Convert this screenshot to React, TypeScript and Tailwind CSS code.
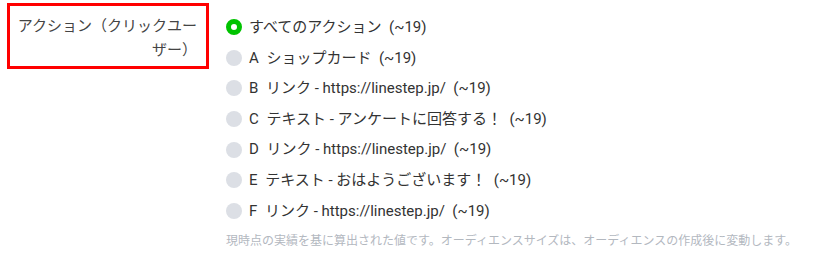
import { useState } from 'react';

const OPTIONS = [
  { id: 'all', label: 'すべてのアクション', count: '(~19)' },
  { id: 'A', label: 'A\u2002ショップカード', count: '(~19)' },
  { id: 'B', label: 'B\u2002リンク - https://linestep.jp/', count: '(~19)' },
  { id: 'C', label: 'C\u2002テキスト - アンケートに回答する！', count: '(~19)' },
  { id: 'D', label: 'D\u2002リンク - https://linestep.jp/', count: '(~19)' },
  { id: 'E', label: 'E\u2002テキスト - おはようございます！', count: '(~19)' },
  { id: 'F', label: 'F\u2002リンク - https://linestep.jp/', count: '(~19)' },
];

function ActionFilter() {
  const [selected, setSelected] = useState('all');

  return (
    <div className="flex min-h-screen bg-white font-['Roboto','Noto_Sans_CJK_JP',sans-serif] text-[#333]">
      <div className="ml-[7px] mt-[3px] h-[66px] w-[202px] shrink-0 border-[3px] border-[#ff0000] pl-[5px] pr-[9px] pt-[8px]">
        <div className="text-right text-[15px] leading-[24px] text-[#444]">
          アクション（クリックユーザー）
        </div>
      </div>

      <div className="ml-[17px] flex flex-col pt-[12px]">
        {OPTIONS.map((o) => (
          <label
            key={o.id}
            className="flex h-[30.6px] cursor-pointer items-center gap-[7px] text-[15px]"
            onClick={() => setSelected(o.id)}
          >
            {selected === o.id ? (
              <span className="h-[16px] w-[16px] shrink-0 rounded-full border-[5px] border-[#00c300] bg-white" />
            ) : (
              <span className="h-[16px] w-[16px] shrink-0 rounded-full bg-[#dcdfe5]" />
            )}
            <span className="whitespace-pre">
              {o.label}
              {'  '}
              {o.count}
            </span>
          </label>
        ))}
        <p className="mt-[6px] text-[12px] text-[#b3b8bf]">
          現時点の実績を基に算出された値です。オーディエンスサイズは、オーディエンスの作成後に変動します。
        </p>
      </div>
    </div>
  );
}

export default function App() {
  return <ActionFilter />;
}
